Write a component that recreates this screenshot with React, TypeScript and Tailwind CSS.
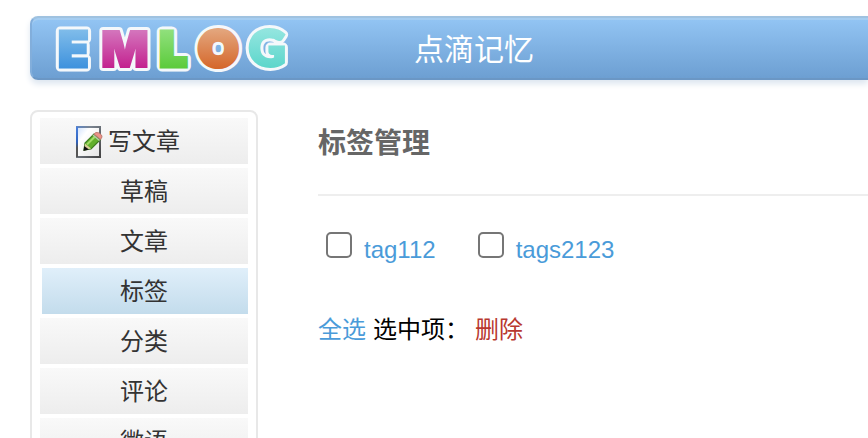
import clsx from "clsx";

type MenuItem = { label: string; href: string; write?: boolean };

const menu: MenuItem[] = [
  { label: "写文章", href: "#write", write: true },
  { label: "草稿", href: "#drafts" },
  { label: "文章", href: "#articles" },
  { label: "标签", href: "#tags" },
  { label: "分类", href: "#sorts" },
  { label: "评论", href: "#comments" },
  { label: "微语", href: "#twitter" },
];

const tags = ["tag112", "tags2123"];

const letters = [
  { char: "E", x: 58, y: 67, size: 50, stroke: 3, font: "Inter", from: "#7fbcea", to: "#3f92dd" },
  { char: "M", x: 101, y: 67, size: 50, stroke: 2, font: "Inter", from: "#d476bd", to: "#c3218f" },
  { char: "L", x: 160, y: 66, size: 47, stroke: 5, font: "Inter", from: "#90e07c", to: "#5ccb3c" },
  { char: "O", x: 200, y: 65, size: 45, stroke: 8, font: "Lato", from: "#e3a57c", to: "#d5682c" },
  { char: "G", x: 249, y: 66, size: 50, stroke: 4, font: "Lato", from: "#92e5df", to: "#5cd6cb" },
];

function Logo() {
  return (
    <svg viewBox="50 20 250 56" className="h-14 w-[250px] shrink-0 overflow-visible" role="img" aria-label="EMLOG">
      <defs>
        {letters.map((l) => (
          <linearGradient key={l.char} id={`logo-${l.char}`} gradientUnits="userSpaceOnUse" x1="0" y1="30" x2="0" y2="68">
            <stop offset="0" stopColor={l.from} />
            <stop offset="1" stopColor={l.to} />
          </linearGradient>
        ))}
      </defs>
      <g fontWeight="900">
        {letters.map((l) => (
          <text
            key={l.char}
            x={l.x}
            y={l.y}
            fontFamily={`${l.font}, sans-serif`}
            fontSize={l.size}
            fill="#f4f8fb"
            stroke="#f4f8fb"
            strokeWidth={l.stroke + 6}
            strokeLinejoin="round"
          >
            {l.char}
          </text>
        ))}
        {letters.map((l) => (
          <text
            key={l.char}
            x={l.x}
            y={l.y}
            fontFamily={`${l.font}, sans-serif`}
            fontSize={l.size}
            fill={`url(#logo-${l.char})`}
            stroke={`url(#logo-${l.char})`}
            strokeWidth={l.stroke}
            strokeLinejoin="miter"
            strokeMiterlimit="2"
            aria-hidden="true"
          >
            {l.char}
          </text>
        ))}
      </g>
    </svg>
  );
}

function WriteIcon() {
  return (
    <svg viewBox="0 0 28 32" className="h-8 w-7 shrink-0" aria-hidden="true">
      <defs>
        <linearGradient id="sheet-edge" x1="0" y1="0" x2="1" y2="1">
          <stop offset="0" stopColor="#5f86c4" />
          <stop offset="0.3" stopColor="#7b8490" />
          <stop offset="1" stopColor="#444" />
        </linearGradient>
        <linearGradient id="sheet-side" x1="0" y1="0" x2="0" y2="1">
          <stop offset="0" stopColor="#4a80dc" />
          <stop offset="0.5" stopColor="#2f62bd" />
          <stop offset="0.7" stopColor="#555" />
        </linearGradient>
        <linearGradient id="sheet" x1="0" y1="0" x2="1" y2="1">
          <stop offset="0" stopColor="#cfe1fc" />
          <stop offset="0.3" stopColor="#fff" />
          <stop offset="1" stopColor="#e4e4e4" />
        </linearGradient>
      </defs>
      <rect x="1" y="1" width="23" height="30" fill="url(#sheet)" stroke="url(#sheet-edge)" strokeWidth="2" />
      <rect x="0" y="1" width="2" height="30" fill="url(#sheet-side)" />
      <path d="M8 24 9 17 18 8 24.500 13.500 15 23Z" fill="#62b02c" stroke="#3f7f22" strokeWidth="1.2" />
      <path d="M11 18.500 19 10.500" stroke="#a2dc66" strokeWidth="2" />
      <path d="M18 8 20 6.500q3-.5 5.500 2.500l.5 2-1.500 2.500Z" fill="#ec9288" stroke="#c07a70" strokeWidth="1" />
      <path d="m17 9 6.500 5.500" stroke="#b4c9a8" strokeWidth="1.500" />
      <path d="m8 24.500 1-7 6 5Z" fill="#d9cf98" />
      <path d="m7.500 25 .7-5 4.800 3.500Z" fill="#111" />
    </svg>
  );
}

function SideMenu({ current }: { current: string }) {
  return (
    <nav className="w-[228px] shrink-0 rounded-lg border-2 border-[#e8e8e8] px-2 py-1.5">
      <ul className="flex flex-col gap-1">
        {menu.map((item) => {
          const active = item.label === current;
          return (
            <li key={item.label} className={clsx(active && "pl-0.5")}>
              <a
                href={item.href}
                aria-current={active ? "page" : undefined}
                className={clsx(
                  "flex h-[46px] items-center justify-center bg-linear-to-b pt-0.5 text-2xl text-[#333]",
                  active ? "from-[#e0effa] to-[#c3dcec] pr-0.5" : "from-[#f9f9f9] to-[#ededed]",
                  item.write && "gap-1 pr-8"
                )}
              >
                {item.write && <WriteIcon />}
                {item.label}
              </a>
            </li>
          );
        })}
      </ul>
    </nav>
  );
}

export default function App() {
  return (
    <div className="h-screen overflow-hidden bg-white pt-4 pl-[30px] font-['Liberation_Sans','Noto_Sans_CJK_SC',sans-serif] text-black">
      <header className="flex h-16 items-center rounded-l-lg border-y-2 border-l-2 border-t-[#9fc2e0] border-b-[#6b97c5] border-l-[#82aedb] bg-linear-to-b from-[#93c5f4] to-[#6d9fd2] pl-[18px] shadow-[inset_0_2px_0_#a5cdf1,0_4px_6px_#dde6f0]">
        <Logo />
        <a href="#home" className="ml-[114px] pt-1 text-3xl text-white">
          点滴记忆
        </a>
      </header>

      <div className="flex items-start gap-[60px] pt-[30px]">
        <SideMenu current="标签" />
        <main className="min-w-0 flex-1">
          <h1 className="border-b-2 border-[#eee] pt-3.5 pb-[30px] text-[28px] leading-10 font-bold text-[#666]">标签管理</h1>

          <form>
            <ul className="flex gap-[42px] pt-9 pl-2">
              {tags.map((tag) => (
                <li key={tag} className="flex items-start gap-3">
                  <input
                    type="checkbox"
                    id={tag}
                    aria-label={tag}
                    className="size-[26px] appearance-none rounded-[5px] border-2 border-[#767676] bg-white checked:bg-[#4a9bd9]"
                  />
                  <a href={`#${tag}`} className="pt-0.5 text-2xl text-[#4a9bd9]">
                    {tag}
                  </a>
                </li>
              ))}
            </ul>

            <div className="flex items-center pt-12 text-2xl">
              <button type="button" className="text-[#4a9bd9]">
                全选
              </button>
              <span className="ml-[7px]">选中项：</span>
              <button type="button" className="ml-1.5 text-[#b8382f]">
                删除
              </button>
            </div>
          </form>
        </main>
      </div>
    </div>
  );
}
